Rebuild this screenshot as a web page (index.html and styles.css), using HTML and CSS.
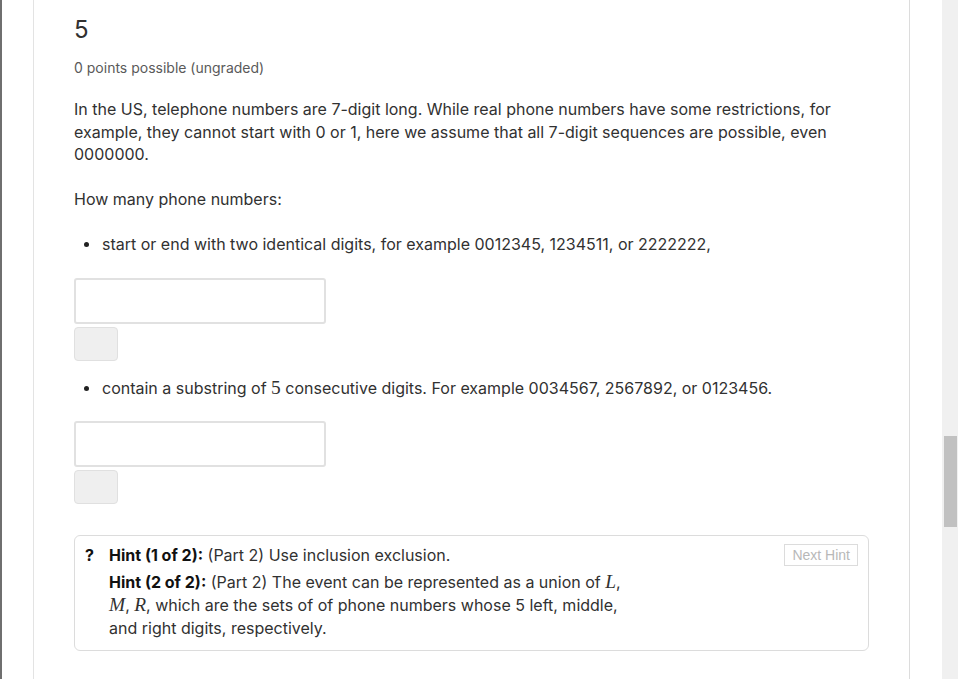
FILE: index.html
```html
<!DOCTYPE html>
<html lang="en">
<head>
<meta charset="utf-8">
<title>Problem 5</title>
<link rel="stylesheet" href="styles.css">
</head>
<body>
<div class="page">
  <div class="card">
    <h3 class="problem-title">5</h3>
    <div class="points">0 points possible (ungraded)</div>
    <p class="para">In the US, telephone numbers are 7-digit long. While real phone numbers have some restrictions, for example, they cannot start with 0 or 1, here we assume that all 7-digit sequences are possible, even 0000000.</p>
    <p class="para q">How many phone numbers:</p>

    <div class="bullet">start or end with two identical digits, for example 0012345, 1234511, or 2222222,</div>
    <div class="answer">
      <input class="field" type="text" aria-label="answer 1">
      <button class="check" type="button" aria-label="check 1"></button>
    </div>

    <div class="bullet second">contain a substring of <span class="math">5</span> consecutive digits. For example 0034567, 2567892, or 0123456.</div>
    <div class="answer">
      <input class="field" type="text" aria-label="answer 2">
      <button class="check" type="button" aria-label="check 2"></button>
    </div>

    <div class="hintbox">
      <div class="qmark">?</div>
      <div class="hints">
        <div class="hint"><b>Hint (1 of 2):</b> (Part 2) Use inclusion exclusion.</div>
        <div class="hint second"><b>Hint (2 of 2):</b> (Part 2) The event can be represented as a union of <span class="math it">L</span>,<br><span class="math it">M</span>, <span class="math it">R</span>, which are the sets of of phone numbers whose 5 left, middle,<br>and right digits, respectively.</div>
      </div>
      <button class="next" type="button">Next Hint</button>
    </div>
  </div>
</div>
<div class="scrollbar"><div class="thumb"></div></div>
</body>
</html>
```

FILE: styles.css
```css
html, body {
  margin: 0;
  padding: 0;
  background: #fff;
  height: 100%;
  overflow: hidden;
}
body {
  font-family: Inter, "Noto Sans", sans-serif;
  color: #313131;
}
.page {
  border-left: 2px solid #6f6f6f;
  padding-left: 31px;
  min-height: 100%;
  box-sizing: border-box;
}
.card {
  width: 877px;
  box-sizing: border-box;
  border-left: 1px solid #e3e3e3;
  border-right: 1px solid #dcdcdc;
  padding: 16px 40px 40px 40px;
  min-height: 679px;
}
.problem-title {
  margin: 0;
  font-size: 24px;
  font-weight: 400;
  line-height: 28px;
  color: #313131;
}
.points {
  margin-top: 14px;
  font-size: 14px;
  line-height: 20px;
  color: #5a5a5a;
}
.para {
  margin: 20px 0 0 0;
  font-size: 16px;
  line-height: 22.5px;
  width: 794px;
}
.para.q {
  margin-top: 22.5px;
}
.bullet {
  position: relative;
  margin-top: 22.5px;
  padding-left: 28px;
  font-size: 16px;
  line-height: 22.5px;
}
.bullet.second {
  margin-top: 16px;
}
.bullet::before {
  content: "";
  position: absolute;
  left: 10px;
  top: 9px;
  width: 5px;
  height: 5px;
  border-radius: 50%;
  background: #222;
}
.answer {
  display: flex;
  flex-direction: column;
  align-items: flex-start;
  gap: 3px;
  margin-top: 22px;
}
.field {
  width: 252px;
  height: 46px;
  box-sizing: border-box;
  border: 2px solid #e1e1e1;
  border-radius: 3px;
  background: #fff;
  margin: 0;
}
.check {
  width: 44px;
  height: 34px;
  box-sizing: border-box;
  border: 1px solid #e0e0e0;
  border-radius: 4px;
  background: #efefef;
  margin: 0;
  padding: 0;
}
.math {
  font-family: "Liberation Serif", "DejaVu Serif", serif;
  font-size: 1.21em;
  line-height: 1;
}
.math.it {
  font-style: italic;
}
.hintbox {
  margin-top: 31px;
  width: 795px;
  box-sizing: border-box;
  border: 1px solid #dcdcdc;
  border-radius: 6px;
  display: flex;
  align-items: flex-start;
  padding: 8px 10px 10px 10px;
  font-size: 16px;
  line-height: 23px;
}
.qmark {
  width: 24px;
  font-weight: 700;
  color: #111;
  flex: none;
}
.hints {
  flex: 1;
  white-space: nowrap;
}
.hint b {
  color: #111;
  font-weight: 700;
}
.hint.second {
  margin-top: 4px;
}
.next {
  flex: none;
  margin: 0;
  height: 22px;
  padding: 0 7px;
  box-sizing: border-box;
  background: #fff;
  border: 1px solid #dcdcdc;
  border-radius: 0;
  font-family: "Liberation Sans", Arial, sans-serif;
  font-size: 14px;
  line-height: 20px;
  color: #b8b8b8;
}
.scrollbar {
  position: fixed;
  top: 0;
  right: 0;
  width: 16px;
  height: 679px;
  background: #f0f0f0;
}
.thumb {
  position: absolute;
  left: 2px;
  top: 436px;
  width: 13px;
  height: 91px;
  background: #c1c1c1;
}
```
